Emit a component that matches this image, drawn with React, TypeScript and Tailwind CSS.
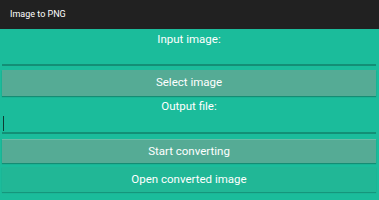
import React from "react";

export default function App() {
  return (
    <div className="w-[379px] h-[200px] bg-[#1bbc9b] flex flex-col" style={{ fontFamily: "Roboto, 'Noto Sans', sans-serif" }}>
      <div className="h-[29px] bg-[#212121] flex items-center pl-[10px] text-white text-[9px]">Image to PNG</div>
      <div className="flex flex-col pl-[2px] pr-[3px]">
        <div className="text-center text-white text-[11.5px] leading-[17px] mt-[2px]">Input image:</div>
        <div className="h-[18px] border-b-[2px] border-[#138f76]"></div>
        <button className="mt-[4px] h-[26px] bg-[#55ab95] text-white text-[11.5px] shadow-[0_1px_1px_rgba(0,0,0,0.25)]">Select image</button>
        <div className="text-center text-white text-[11.5px] leading-[17px] mt-[2px]">Output file:</div>
        <div className="h-[19px] border-b-[2px] border-[#138f76] flex items-center">
          <div className="w-[1px] h-[15px] bg-[#0d3d33] ml-[1px]"></div>
        </div>
        <button className="mt-[5px] h-[24px] bg-[#55ab95] text-white text-[11.5px] border-t border-[#6bbba6] shadow-[0_1px_1px_rgba(0,0,0,0.25)]">Start converting</button>
        <button className="mt-[4px] h-[25px] bg-[#21b796] text-white text-[11.5px] shadow-[0_1px_1px_rgba(0,0,0,0.2)]">Open converted image</button>
      </div>
    </div>
  );
}
